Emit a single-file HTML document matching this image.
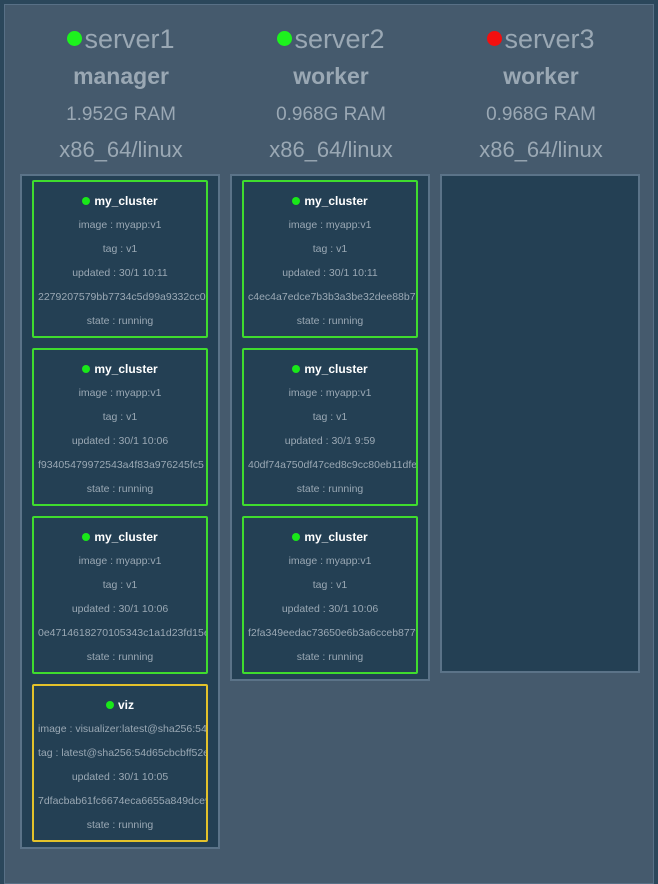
<!DOCTYPE html>
<html><head><style>
*{margin:0;padding:0;box-sizing:border-box}
body{width:658px;height:882px;background:#2b475b;font-family:"Liberation Sans",sans-serif;overflow:hidden;position:relative}
.panel{position:absolute;left:4px;top:4px;width:650px;height:880px;background:#455a6d;border:1px solid #587086}
.col{position:absolute;top:0;width:210px}
.hd{text-align:center;color:#9aa8b4}
.h1{position:absolute;top:18px;left:0;width:210px;font-size:27px;line-height:32px}
.h1 .d{display:inline-block;width:15px;height:15px;border-radius:50%;vertical-align:2px;margin-right:2px}
.h2{position:absolute;top:56px;left:0;width:210px;font-size:23px;font-weight:bold;line-height:30px}
.h3{position:absolute;top:97px;left:0;width:210px;font-size:19px;line-height:26px}
.h4{position:absolute;top:131px;left:0;width:210px;font-size:22px;line-height:28px}
.box{position:absolute;top:169px;width:200px;background:#244054;border:2px solid #5b7388}
.card{position:absolute;left:10px;width:176px;height:158px;border:2px solid #3fdc2e;border-radius:2px;overflow:hidden}
.card.y{border-color:#e3c22b}
.card div{white-space:nowrap;text-align:center;font-size:10.5px;color:#9aa8b4;height:24px;line-height:24px;padding:0 4px;overflow:hidden}
.card .t{color:#fff;font-weight:bold;font-size:12px;margin-top:7px}
.card .t span{display:inline-block;width:8px;height:8px;border-radius:50%;background:#19e819;margin-right:4px;vertical-align:0}
</style></head><body>
<div class="panel">
<div class="col" style="left:11px">
<div class="hd h1"><span class="d" style="background:#1df21d"></span>server1</div>
<div class="hd h2">manager</div><div class="hd h3">1.952G RAM</div><div class="hd h4">x86_64/linux</div>
<div class="box" style="left:4px;height:675px">
<div class="card" style="top:4px"><div class="t"><span></span>my_cluster</div><div>image : myapp:v1</div><div>tag : v1</div><div>updated : 30/1 10:11</div><div>2279207579bb7734c5d99a9332cc06</div><div>state : running</div></div>
<div class="card" style="top:172px"><div class="t"><span></span>my_cluster</div><div>image : myapp:v1</div><div>tag : v1</div><div>updated : 30/1 10:06</div><div>f93405479972543a4f83a976245fc5</div><div>state : running</div></div>
<div class="card" style="top:340px"><div class="t"><span></span>my_cluster</div><div>image : myapp:v1</div><div>tag : v1</div><div>updated : 30/1 10:06</div><div>0e4714618270105343c1a1d23fd15e</div><div>state : running</div></div>
<div class="card y" style="top:508px"><div class="t"><span></span>viz</div><div>image : visualizer:latest@sha256:54d</div><div>tag : latest@sha256:54d65cbcbff52ee</div><div>updated : 30/1 10:05</div><div>7dfacbab61fc6674eca6655a849dce9</div><div>state : running</div></div>
</div></div>
<div class="col" style="left:221px">
<div class="hd h1"><span class="d" style="background:#1df21d"></span>server2</div>
<div class="hd h2">worker</div><div class="hd h3">0.968G RAM</div><div class="hd h4">x86_64/linux</div>
<div class="box" style="left:4px;height:507px">
<div class="card" style="top:4px"><div class="t"><span></span>my_cluster</div><div>image : myapp:v1</div><div>tag : v1</div><div>updated : 30/1 10:11</div><div>c4ec4a7edce7b3b3a3be32dee88b73</div><div>state : running</div></div>
<div class="card" style="top:172px"><div class="t"><span></span>my_cluster</div><div>image : myapp:v1</div><div>tag : v1</div><div>updated : 30/1 9:59</div><div>40df74a750df47ced8c9cc80eb11dfe</div><div>state : running</div></div>
<div class="card" style="top:340px"><div class="t"><span></span>my_cluster</div><div>image : myapp:v1</div><div>tag : v1</div><div>updated : 30/1 10:06</div><div>f2fa349eedac73650e6b3a6cceb877f</div><div>state : running</div></div>
</div></div>
<div class="col" style="left:431px">
<div class="hd h1"><span class="d" style="background:#f20f0f"></span>server3</div>
<div class="hd h2">worker</div><div class="hd h3">0.968G RAM</div><div class="hd h4">x86_64/linux</div>
<div class="box" style="left:4px;height:499px"></div>
</div>
</div>
</body></html>
